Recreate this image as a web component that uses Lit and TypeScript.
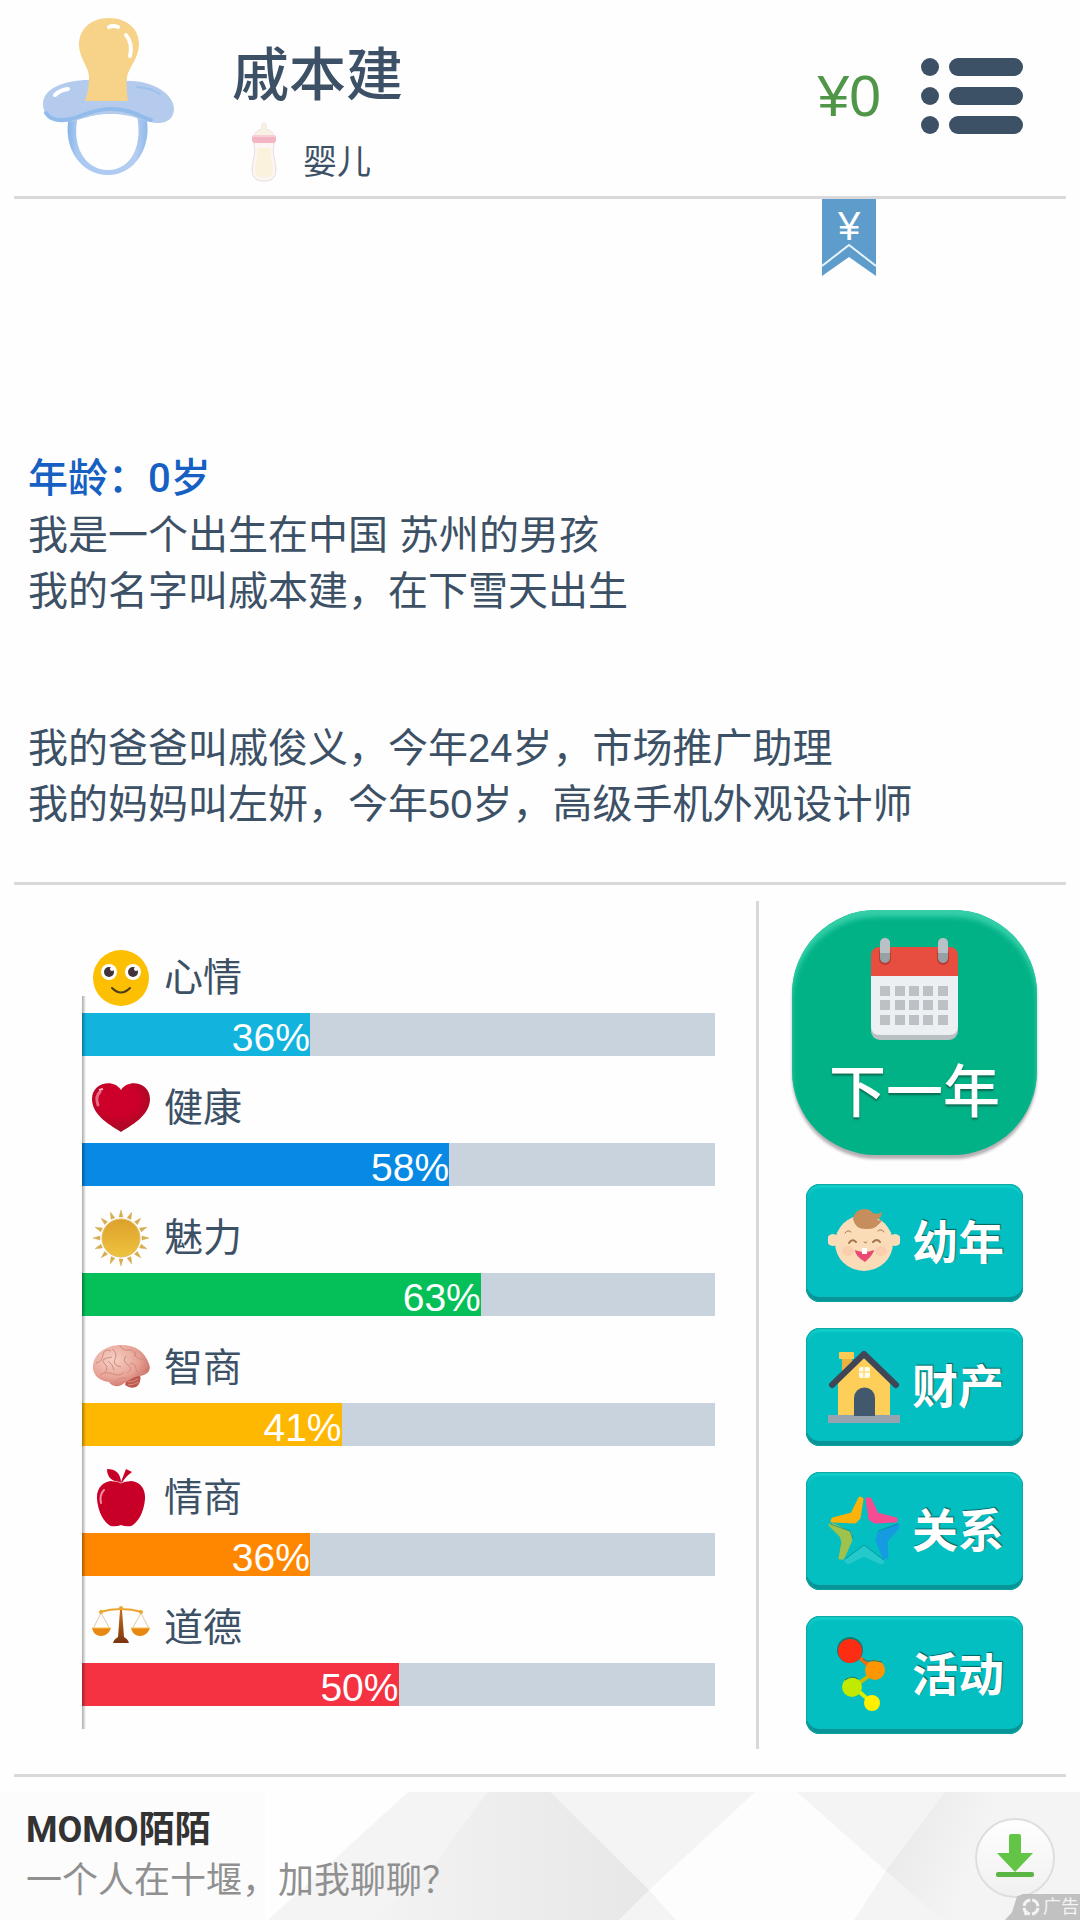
import { LitElement, html, css, svg, nothing } from "lit";
import { customElement, property } from "lit/decorators.js";

const pacifier = html`<svg class="pacifier" viewBox="0 0 131 157" aria-hidden="true">
  <defs>
    <linearGradient id="ring" x1="0" x2="1"><stop offset="0" stop-color="#86b4e8" /><stop offset=".12" stop-color="#a9c9f1" /><stop offset=".85" stop-color="#b4cdf1" /><stop offset="1" stop-color="#8fbae9" /></linearGradient>
  </defs>
  <path fill="url(#ring)" fill-rule="evenodd" d="M26 98C19 130 38 157 65 157C93 157 110 127 103 98ZM35 98C28 128 42 152 65 152C88 152 100 128 94 98Z" />
  <path fill="#b4cbee" d="M46 62C20 62 0 71 0 86C0 98 10 105 22 104C39 103 45 96 68 96C91 96 97 103 113 105C124 106 131 100 131 91C131 75 108 63 88 63Z" />
  <path fill="none" stroke="#91bbea" stroke-width="4" stroke-linecap="round" d="M3 95C8 103 18 103 27 101C42 98 48 91 68 91C88 91 97 99 108 102" />
  <path fill="none" stroke="#9dc0ec" stroke-width="2" stroke-linecap="round" d="M94 69Q108 70 117 76" />
  <path fill="#f6d389" d="M66 0C48 0 36 11 36 27C36 40 46 49 46 59C46 68 45 74 42 83H85C84 75 83 68 84 59C86 49 96 40 96 26C96 11 84 0 66 0Z" />
  <path fill="none" stroke="#fff" stroke-width="4" stroke-linecap="round" d="M66 9Q70 7 75 9M83 17Q90 25 87 38M12 77Q17 72 25 71" />
</svg>`;

const bottle = html`<svg class="bottle" viewBox="0 0 26 60" aria-hidden="true">
  <path fill="#f7f1e6" stroke="#ece5de" d="M13 1Q16 1 15 7Q22 9 23 14H3Q4 9 11 7Q10 1 13 1Z" />
  <path fill="#fbf6f4" stroke="#e9dedc" d="M3 20H23Q21 31 24 40Q28 58 16 59H10Q-2 58 2 40Q5 31 3 20Z" />
  <path fill="#fbf2db" d="M6 26H20Q19 33 21 41Q24 55 15 55H11Q2 55 5 41Q7 33 6 26Z" />
  <rect x="1" y="13" width="24" height="8" rx="3" fill="#f2b6c2" />
  <path stroke="#f8d0d7" stroke-width="2" d="M2 14H24" />
</svg>`;

const menuIcon = html`<svg class="menu-icon" viewBox="0 0 102 76" fill="#3d5166" aria-hidden="true">
  ${[0, 29, 58].map((y) => svg`<circle cx="9" cy=${y + 9} r="9" /><rect x="28" y=${y} width="74" height="18" rx="9" />`)}
</svg>`;

const rays = Array.from({ length: 16 }, (_, i) => i * 22.5);

const icons: Record<string, unknown> = {
  mood: svg`<circle cx="29" cy="29" r="28" fill="#fdbf02" />
    <circle cx="17" cy="23" r="8" fill="#fff" /><circle cx="41" cy="23" r="8" fill="#fff" />
    <circle cx="17" cy="23" r="5" fill="#42323a" /><circle cx="41" cy="23" r="5" fill="#42323a" />
    <circle cx="20" cy="20" r="2" fill="#fff" /><circle cx="44" cy="20" r="2" fill="#fff" />
    <path fill="none" stroke="#4b3a1d" stroke-width="2" stroke-linecap="round" d="M20 39Q29 48 38 39" />`,
  health: svg`<defs><radialGradient id="heart" cx=".45" cy=".35" r=".65"><stop offset=".5" stop-color="#cc0029" /><stop offset="1" stop-color="#a30b22" /></radialGradient></defs>
    <path fill="url(#heart)" d="M29 53C20 47 0 37 0 20C0 4 21 -1 29 11C37 -1 58 4 58 20C58 37 38 47 29 53Z" />
    <path fill="none" stroke="#f0869a" stroke-width="3" stroke-linecap="round" d="M6 26Q3 17 8 13" opacity=".8" />
    <path stroke="#f7b6c1" stroke-width="2" d="M7 11L11 10" />`,
  charm: svg`<defs><linearGradient id="sun" x2="0" y2="1"><stop offset="0" stop-color="#dda02b" /><stop offset="1" stop-color="#eec33f" /></linearGradient></defs>
    ${rays.map((r) => svg`<path d="M27 8L29 1L31 8Z" fill="#d5ac50" stroke="#d5ac50" stroke-width=".5" transform="rotate(${r} 29 29)" />`)}
    <circle cx="29" cy="29" r="19" fill="url(#sun)" stroke="#e2bb5d" stroke-width="1" />`,
  wit: svg`<defs><radialGradient id="brain" cx=".35" cy=".35" r=".75"><stop offset="0" stop-color="#f6d0c6" /><stop offset=".6" stop-color="#e8a497" /><stop offset="1" stop-color="#c8695e" /></radialGradient></defs>
    <path fill="#bd5a50" d="M35 38Q42 36 48 35Q50 44 44 48Q38 50 33 46Z" />
    <g transform="translate(0 -2)">
      <path fill="url(#brain)" d="M1 32C0 17 14 8 29 8C44 8 53 15 57 27C60 34 54 39 47 39C41 40 38 43 34 45C27 51 20 50 17 45C8 44 2 39 1 32Z" />
      <path fill="none" stroke="#cf8c81" stroke-width="1" d="M4 26Q10 25 11 18T19 14M13 36Q17 30 12 26T20 20M20 12Q26 16 23 22T29 30M28 9Q31 14 37 13T43 20M34 19Q30 24 36 28T35 36M44 14Q42 22 49 22T54 31M8 38Q14 34 21 37T32 35M24 46Q25 40 34 41M38 27Q43 25 44 32T53 36M16 24Q21 27 22 33" />
      <path fill="none" stroke="#d98f83" stroke-width="1" d="M36 45Q41 45 46 42M36 48Q41 48 47 45" />
    </g>`,
  empathy: svg`<path fill="#c80027" d="M29 14C43 8 54 16 53 30C52 43 46 54 39 57Q34 58 29 56Q24 58 19 57C12 54 6 43 5 30C4 16 16 8 29 14Z" />
    <path fill="#c80027" d="M29 14Q15 12 15 0Q28 0 29 13L34 0L40 3Q33 8 30 14Z" />
    <path fill="none" stroke="#fff" d="M20 12Q26 12 29 14Q32 12 38 12" opacity=".6" />
    <path fill="none" stroke="#f08fa0" stroke-width="2" stroke-linecap="round" d="M9 34Q7 26 12 21" />`,
  moral: svg`<defs><linearGradient id="post" x2="0" y2="1"><stop offset="0" stop-color="#c6701c" /><stop offset="1" stop-color="#7a3510" /></linearGradient></defs>
    <g transform="translate(0 -3)">
      <path fill="none" stroke="#dfc8a3" stroke-width="1" d="M9 17L1 33M9 17L18 33M49 17L40 33M49 17L57 33" />
      <path fill="none" stroke="#eca630" stroke-width="2" d="M8 16Q18 13 29 13T50 16" />
      <circle cx="9" cy="16" r="2" fill="#eca630" /><circle cx="49" cy="16" r="2" fill="#eca630" /><circle cx="29" cy="12" r="2" fill="#eca630" />
      <path fill="#e78812" d="M0 32H19Q16 40 9 40T0 32ZM39 32H58Q55 40 48 40T39 32Z" />
      <path stroke="#f8c04c" stroke-width="1" d="M0 32H19M39 32H58" />
      <path fill="url(#post)" d="M28 14H30L32 41Q36 43 37 47H21Q22 43 26 41Z" />
    </g>`,
  childhood: svg`<circle cx="5" cy="35" r="6" fill="#fbdcb8" /><circle cx="67" cy="35" r="6" fill="#fbdcb8" />
    <ellipse cx="36" cy="38" rx="29" ry="28" fill="#fbdcb8" />
    <ellipse cx="20" cy="46" rx="6" ry="5" fill="#fbcfae" /><ellipse cx="53" cy="46" rx="6" ry="5" fill="#fbcfae" />
    <path fill="#c58e5c" d="M25 14Q27 4 36 4Q42 4 45 8Q50 10 54 7Q54 12 49 15Q54 16 55 14Q49 24 40 24Q27 25 25 14Z" />
    <path fill="none" stroke="#a4754a" stroke-width="1" stroke-linecap="round" d="M17 28Q20 24 23 27M50 26Q53 23 56 27M36 37Q38 39 39 37" />
    <path fill="none" stroke="#a4754a" stroke-width="2" stroke-linecap="round" d="M21 38Q24 33 28 37M45 37Q49 33 52 37" />
    <path fill="#ea4a72" d="M27 45Q36 49 46 45Q46 49 37 57Q27 51 27 45Z" />
    <path fill="#fff" d="M34 43H39V49H34Z" />`,
  assets: svg`<path fill="#e9b23f" d="M14 8H24V26L14 34Z" /><rect x="11" y="3" width="15" height="7" rx="1" fill="#fdcb53" />
    <path fill="#fdcf58" d="M10 34L36 7L62 34V67H10Z" />
    <rect x="0" y="66" width="72" height="8" fill="#97a4b0" />
    <path fill="#41586d" d="M26 67V49A10 10 0 0 1 47 49V67Z" />
    <rect x="31" y="18" width="11" height="11" rx="2" fill="#fffbe5" /><path stroke="#fdcf58" d="M36 18V29M31 23H42" />
    <path fill="none" stroke="#3f4757" stroke-width="6" stroke-linecap="round" stroke-linejoin="round" d="M4 36L36 5L68 36" />`,
  relations: svg`<g stroke-width="3" stroke-linejoin="round" transform="translate(0 2)">
      <path fill="#fdb20a" stroke="#fdb20a" d="M32 3L24 19L5 24L4 26L27 27L31 23L34 4Z" />
      <path fill="#f54c92" stroke="#f54c92" d="M39 4L42 4L49 19L68 24L68 26L47 27L42 24Z" />
      <path fill="#9fc24d" stroke="#9fc24d" d="M2 30L6 30L22 38L23 45L15 63L12 63L15 47L13 41Z" />
      <path fill="#169be0" stroke="#169be0" d="M70 30L66 31L51 38L49 45L56 63L59 62L58 46L69 34Z" />
      <path fill="#25c9cb" stroke="#25c9cb" d="M36 52L55 67L53 68L36 60L20 68L18 66Z" />
    </g>
    <path fill="none" stroke="#07888b" opacity=".7" d="M2 31L22 38L25 46M50 38L70 31M17 66L36 52L56 67" />`,
  activity: svg`<path fill="none" stroke="#f06a10" stroke-width="4" d="M31 20L46 33" /><path fill="none" stroke="#cdb800" stroke-width="4" d="M42 38L26 50" /><path fill="none" stroke="#d8f000" stroke-width="4" d="M28 52L42 64" />
    <circle cx="22" cy="13" r="13" fill="#17796f" /><circle cx="22" cy="14" r="12" fill="#fc2d13" />
    <circle cx="47" cy="33" r="10" fill="#fe9601" /><circle cx="24" cy="50" r="10" fill="#c0eb00" /><circle cx="44" cy="66" r="8" fill="#fff000" />
    <path fill="none" stroke="#17796f" d="M35 22Q39 25 42 24T54 25M17 43Q24 38 30 42" />`,
};

const calendar = html`<svg class="calendar" viewBox="0 0 87 102" aria-hidden="true">
  <rect x="0" y="24" width="87" height="78" rx="9" fill="#b9c0c4" />
  <path fill="#ecf0f3" d="M0 36H87V88Q87 97 78 97H9Q0 97 0 88Z" />
  <path fill="#e84e40" d="M0 38V18Q0 9 9 9H78Q87 9 87 18V38Z" />
  ${[9, 67].map((x) => svg`<rect x=${x - 1} y="9" width="12" height="18" rx="6" fill="#b63c34" /><rect x=${x} y="0" width="10" height="25" rx="5" fill="#95a1a3" /><path fill="#b7c1c6" d="M${x} 15V5a5 5 0 0 1 10 0V15Z" />`)}
  ${[48, 62, 77].map((y) => [9, 24, 38, 52, 67].map((x) => svg`<rect x=${x} y=${y} width="10" height="10" fill="#bcc1c5" />`))}
</svg>`;

interface Stat { key: string; label: string; value: number; color: string }

@customElement("stat-row")
export class StatRow extends LitElement {
  @property({ attribute: false }) stat!: Stat;

  static styles = css`
    :host { display: block; }
    .label { display: flex; align-items: center; gap: 14px; height: 70px; padding-left: 10px; font-size: 39px; line-height: 56px; }
    .icon { width: 58px; height: 58px; flex: none; }
    .track { height: 43px; background: #c9d3de; }
    .fill { box-sizing: border-box; height: 100%; padding-top: 3px; color: #fff; font-size: 39px; line-height: 43px; text-align: right; }
  `;

  render() {
    const { key, label, value, color } = this.stat;
    return html`
      <div class="label"><svg class="icon" viewBox="0 0 58 58" aria-hidden="true">${icons[key] ?? nothing}</svg><span id="name">${label}</span></div>
      <div class="track" role="progressbar" aria-labelledby="name" aria-valuenow=${value}>
        <div class="fill" style="width:${value}%;background:${color}">${value}%</div>
      </div>`;
  }
}

@customElement("app-root")
export class AppRoot extends LitElement {
  stats: Stat[] = [
    { key: "mood", label: "心情", value: 36, color: "#12b4de" },
    { key: "health", label: "健康", value: 58, color: "#088ae4" },
    { key: "charm", label: "魅力", value: 63, color: "#05bf59" },
    { key: "wit", label: "智商", value: 41, color: "#ffb802" },
    { key: "empathy", label: "情商", value: 36, color: "#ff8700" },
    { key: "moral", label: "道德", value: 50, color: "#f43241" },
  ];

  actions = [
    ["childhood", "幼年"],
    ["assets", "财产"],
    ["relations", "关系"],
    ["activity", "活动"],
  ];

  static styles = css`
    :host { display: block; }
    .page { display: flex; flex-direction: column; min-height: 100vh; background: #fefefe; color: #3d5166; font-family: "Liberation Sans", "Noto Sans CJK SC", sans-serif; }
    button { border: 0; padding: 0; background: none; color: inherit; font: inherit; cursor: pointer; }
    h1, h2, p { margin: 0; font-weight: 400; }
    .rule { flex: none; height: 3px; margin: 0 14px; border: 0; background: #d9d9db; }

    header { display: flex; align-items: center; padding: 0 57px 4px 43px; height: 196px; box-sizing: border-box; }
    .pacifier { width: 131px; height: 157px; flex: none; }
    .who { flex: 1; padding: 28px 0 0 58px; }
    .who h1 { font-size: 57px; line-height: 64px; font-weight: 500; font-family: "Noto Sans CJK SC", sans-serif; }
    .stage { display: flex; align-items: flex-end; gap: 26px; padding: 20px 0 0 19px; font-size: 34px; line-height: 40px; }
    .bottle { width: 26px; height: 60px; }
    .money { font-size: 57px; line-height: 64px; color: #509648; padding-right: 40px; }
    .menu { display: flex; }
    .menu-icon { width: 102px; height: 76px; }

    .story { flex: 1; display: flex; flex-direction: column; font-size: 40px; line-height: 56px; padding: 0 28px 50px; }
    .ribbon { align-self: flex-end; margin-right: 176px; width: 54px; height: 77px; }
    .ribbon text { font-family: "Liberation Sans", sans-serif; font-size: 40px; }
    .year { margin-top: auto; padding-top: 40px; }
    .year h2 { font-size: 40px; line-height: 56px; font-weight: 500; font-family: Roboto, "Noto Sans CJK SC", sans-serif; color: #1560c2; }
    .family { margin-top: 101px; }

    .board { display: flex; }
    .stats { position: relative; flex: 1; padding: 58px 41px 0 82px; }
    .stats::after { content: ""; position: absolute; left: 82px; top: 111px; bottom: 45px; width: 4px; background: linear-gradient(90deg, #0005, #0000); }
    .rows { display: flex; flex-direction: column; gap: 17px; }
    .side { display: flex; flex-direction: column; align-items: center; gap: 29px; box-sizing: border-box; width: 324px; margin: 16px 0 25px; padding: 9px 10px 15px 0; border-left: 3px solid #d8d8da; }
    .next { display: flex; flex-direction: column; align-items: center; gap: 16px; width: 245px; height: 245px; padding-top: 28px; box-sizing: border-box; border-radius: 84px; background: #02b287; color: #fff; font-size: 57px; line-height: 72px; font-weight: 500; text-shadow: 0 2px 2px #0a6a50; box-shadow: inset 0 7px 5px #35cfa8, 0 4px 3px #b5afb3; }
    .calendar { width: 87px; height: 102px; flex: none; }
    .actions { display: flex; flex-direction: column; gap: 26px; }
    .action { display: flex; align-items: center; gap: 12px; width: 217px; height: 118px; padding: 0 17px 0 22px; border-radius: 14px; background: #04bfc1; color: #fff; font-size: 46px; line-height: 64px; font-weight: 700; text-shadow: 1px -1px 1px #06605f; box-shadow: inset 0 0 1px 1px #12a4a4, inset 0 -5px 0 #079496, inset 0 4px 2px #0fcfca; box-sizing: border-box; }
    .action svg { width: 72px; height: 76px; flex: none; }

    .ad { display: grid; margin-top: 15px; min-height: 128px; overflow: hidden; }
    .ad > * { grid-area: 1 / 1; }
    .facets { width: 100%; height: 128px; }
    .ad-body { display: flex; align-items: center; justify-content: space-between; padding: 0 25px 0 26px; font-family: Roboto, "Noto Sans CJK SC", sans-serif; font-size: 36px; line-height: 51px; z-index: 1; }
    .ad-body strong { display: block; color: #333; font-weight: 700; }
    .ad-body p { color: #909090; }
    .download { display: block; width: 80px; height: 80px; margin-top: 4px; }
    .tag { align-self: end; justify-self: end; display: flex; align-items: center; gap: 3px; z-index: 2; height: 26px; padding: 0 1px 0 17px; box-sizing: border-box; background: #bdbdbdee; color: #f4f4f4; font-size: 18px; line-height: 26px; clip-path: polygon(0 100%, 7px 70%, 12px 10%, 18px 0, 100% 0, 100% 100%); }
    .tag svg { width: 18px; height: 18px; }
  `;

  render() {
    return html`<div class="page" lang="zh-CN">
      <header>
        ${pacifier}
        <div class="who"><h1>戚本建</h1><div class="stage">${bottle}<span>婴儿</span></div></div>
        <span class="money">¥0</span>
        <button class="menu" aria-label="菜单">${menuIcon}</button>
      </header>
      <hr class="rule" />
      <main class="story">
        <svg class="ribbon" viewBox="0 0 54 77" aria-hidden="true">
          <path fill="#5e9ccb" d="M0 0H54V77L27 58L0 77Z" />
          <path fill="none" stroke="#e6f5fd" stroke-width="2" d="M0 67L27 46L54 67" />
          <text x="27" y="41" text-anchor="middle" fill="#fff">¥</text>
        </svg>
        <div class="year"><h2>年龄：0岁</h2><p>我是一个出生在中国 苏州的男孩</p><p>我的名字叫戚本建，在下雪天出生</p></div>
        <div class="family"><p>我的爸爸叫戚俊义，今年24岁，市场推广助理</p><p>我的妈妈叫左妍，今年50岁，高级手机外观设计师</p></div>
      </main>
      <hr class="rule" />
      <section class="board">
        <div class="stats"><div class="rows">${this.stats.map((s) => html`<stat-row .stat=${s}></stat-row>`)}</div></div>
        <div class="side">
          <button class="next">${calendar}<span>下一年</span></button>
          <div class="actions">
            ${this.actions.map(([key, label]) => html`<button class="action"><svg viewBox="0 0 72 76" aria-hidden="true">${icons[key]}</svg><span>${label}</span></button>`)}
          </div>
        </div>
      </section>
      <hr class="rule" />
      <footer class="ad">
        <svg class="facets" viewBox="0 0 1080 128" preserveAspectRatio="none" aria-hidden="true">
          <defs>
            <linearGradient id="g1"><stop offset="0" stop-color="#f4f4f4" /><stop offset=".5" stop-color="#ededed" /><stop offset="1" stop-color="#e7e7e7" /></linearGradient>
            <linearGradient id="g2" x2="1" y2=".4"><stop offset=".1" stop-color="#e9e9e9" /><stop offset=".8" stop-color="#f4f4f4" /></linearGradient>
          </defs>
          <path fill="#f4f4f4" d="M0 0H1080V128H0Z" />
          <path fill="#fefefe" d="M0 0H408L268 128H0Z" /><path fill="#fcfcfc" d="M0 0H265V128H0Z" />
          <path fill="url(#g1)" d="M488 0H550L649 98L619 128H360Q430 90 450 50Z" />
          <path fill="#fdfdfd" d="M755 0H797L886 79L854 128H676L649 98Z" />
          <path fill="url(#g2)" d="M945 0H1010L1000 128H942L886 79Z" />
        </svg>
        <div class="ad-body">
          <div><strong>MOMO陌陌</strong><p>一个人在十堰，加我聊聊？</p></div>
          <button aria-label="下载"><svg class="download" viewBox="0 0 80 80" aria-hidden="true">
            <defs><linearGradient id="dl" x2="0" y2="1"><stop offset="0" stop-color="#fff" /><stop offset="1" stop-color="#f0f0f0" /></linearGradient></defs>
            <circle cx="40" cy="40" r="39" fill="url(#dl)" stroke="#dedede" stroke-width="2" />
            <path fill="#62c546" d="M36 16H44Q46 16 46 18V35H58L40 54L22 35H34V18Q34 16 36 16Z" /><rect x="21" y="54" width="38" height="5" rx="2" fill="#5bb544" />
          </svg></button>
        </div>
        <span class="tag"><svg viewBox="0 0 18 18" fill="none" stroke="#f4f4f4" stroke-width="3" aria-hidden="true"><circle cx="9" cy="9" r="7" stroke-dasharray="9 2" transform="rotate(8 9 9)" /><path d="M3 17L5 13" /></svg>广告</span>
      </footer>
    </div>`;
  }
}
